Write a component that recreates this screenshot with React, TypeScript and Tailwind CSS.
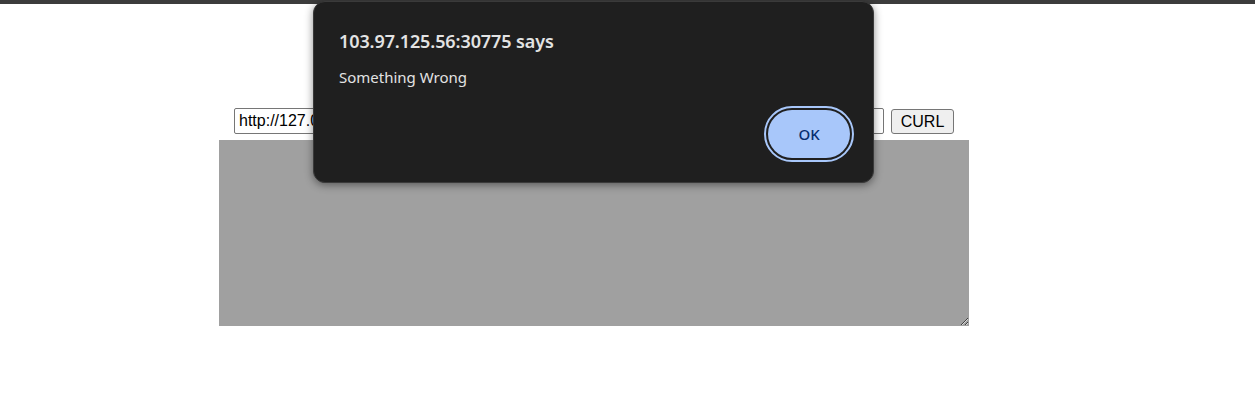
import React from "react";

export default function App() {
  return (
    <div className="relative w-[1255px] h-[420px] bg-white overflow-hidden">
      <div className="h-[4px] bg-[#3c3c3c]" />
      <div className="ml-[219px] w-[750px] pt-[104px] font-['Liberation_Sans',Arial,sans-serif]">
        <div className="flex items-end justify-center gap-[7px]">
          <input
            defaultValue="http://127.0.0.1/flag"
            className="w-[650px] h-[26px] border border-[#767676] rounded-[2px] px-[4px] text-[16px] text-black bg-white outline-none"
          />
          <button className="w-[63px] h-[25px] border border-[#767676] rounded-[3px] bg-[#efefef] text-[16px] text-black leading-none">
            CURL
          </button>
        </div>
        <textarea className="block mt-[6px] w-[750px] h-[186px] bg-[#a0a0a0] border-0 outline-none resize" />
      </div>

      <div className="absolute left-[313px] top-[1px] w-[561px] h-[182px] rounded-[12px] bg-[#1f1f1f] border border-[#3a3a3a] shadow-[0_2px_8px_rgba(0,0,0,0.45)] font-['Noto_Sans',sans-serif] text-[#e3e3e3]">
        <div className="pl-[25px] pt-[27px] text-[18px] font-semibold leading-[24px] tracking-[-0.1px]">103.97.125.56:30775 says</div>
        <div className="pl-[25px] pt-[14px] text-[15px] leading-[20px]">Something Wrong</div>
        <div className="absolute left-[450px] top-[104px] w-[90px] h-[56px] rounded-full border-2 border-[#a8c7fa] p-[2px] bg-[#1f1f1f]">
          <button className="w-full h-full rounded-full bg-[#a8c7fa] text-[#062e6f] text-[15px] font-medium font-['Noto_Sans',sans-serif]">
            OK
          </button>
        </div>
      </div>
    </div>
  );
}
